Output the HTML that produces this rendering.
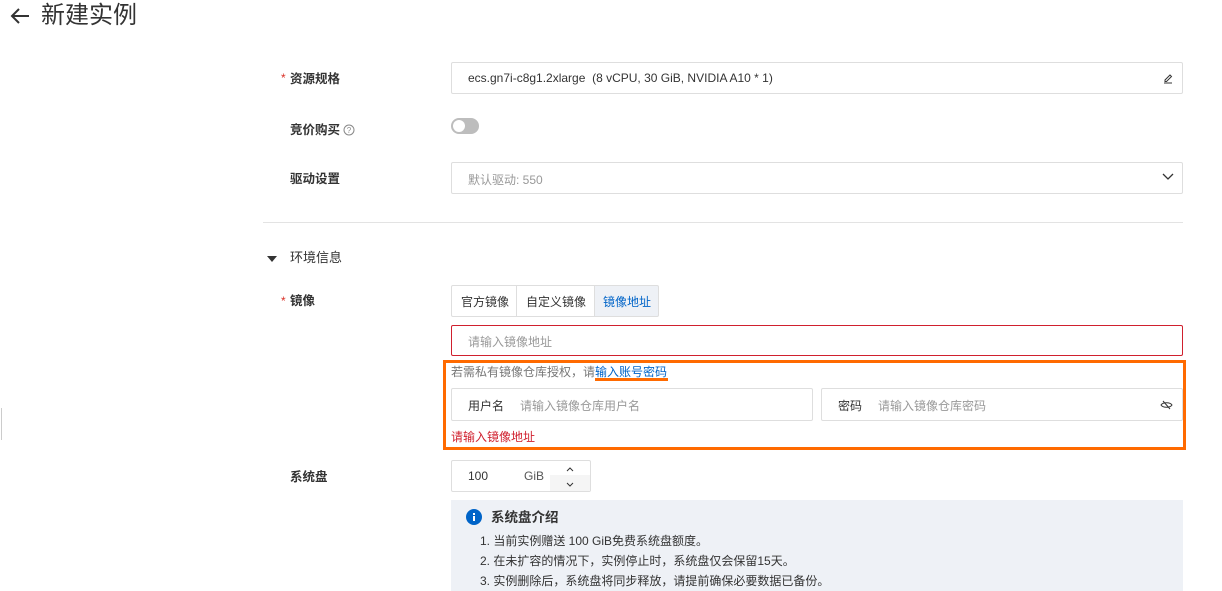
<!DOCTYPE html>
<html><head><meta charset="utf-8"><style>
*{box-sizing:border-box;margin:0;padding:0}
body{width:1222px;height:591px;overflow:hidden;background:#fff;position:relative;font-family:"Liberation Sans","Noto Sans CJK SC",sans-serif;font-size:12px;color:#333}
.a{position:absolute}
.lbl{position:absolute;left:290px;font-size:12.5px;font-weight:bold;color:#333;line-height:16px}
.req{position:absolute;left:281px;color:#d93026;font-size:12px}
.inp{position:absolute;border:1px solid #dedede;background:#fff;border-radius:2px}
.ph{color:#999}
</style></head><body>
<svg class="a" style="left:9px;top:7px" width="22" height="18" viewBox="0 0 22 18"><path d="M20 9H3M10 2L3 9l7 7" fill="none" stroke="#333" stroke-width="2"/></svg>
<div class="a" style="left:41px;top:0px;font-size:24px;line-height:32px;color:#333">新建实例</div>
<div class="a" style="left:1px;top:408px;width:1px;height:32px;background:#ccc"></div>

<span class="req" style="top:71px">*</span><div class="lbl" style="top:71px">资源规格</div>
<div class="inp" style="left:451px;top:62px;width:732px;height:32px"><span class="a" style="left:16px;top:8px">ecs.gn7i-c8g1.2xlarge&nbsp; (8 vCPU, 30 GiB, NVIDIA A10 * 1)</span>
<svg class="a" style="left:710px;top:9px" width="12" height="12" viewBox="0 0 12 12"><path d="M3 8L8 3l1.5 1.5-5 5H3z M2 11h8" fill="none" stroke="#333" stroke-width="1"/></svg></div>

<div class="lbl" style="top:122px">竞价购买</div>
<svg class="a" style="left:343px;top:124px" width="12" height="12" viewBox="0 0 12 12"><circle cx="6" cy="6" r="5" fill="none" stroke="#888"/><text x="6" y="9" font-size="8" text-anchor="middle" fill="#888" font-family="Liberation Sans">?</text></svg>
<div class="a" style="left:451px;top:118px;width:28px;height:16px;border-radius:8px;background:#bdbdbd"><div class="a" style="left:2px;top:2px;width:12px;height:12px;border-radius:50%;background:#fff"></div></div>

<div class="lbl" style="top:171px">驱动设置</div>
<div class="inp" style="left:451px;top:162px;width:732px;height:32px"><span class="a ph" style="left:16px;top:8px">默认驱动: 550</span>
<svg class="a" style="left:710px;top:10px" width="12" height="8" viewBox="0 0 12 8"><path d="M1 1l5 5 5-5" fill="none" stroke="#333" stroke-width="1.3"/></svg></div>

<div class="a" style="left:263px;top:222px;width:920px;height:1px;background:#e3e3e3"></div>
<svg class="a" style="left:267px;top:255px" width="10" height="8"><path d="M0 1h10L5 7z" fill="#333"/></svg>
<div class="lbl" style="top:250px;font-weight:normal;font-size:13px">环境信息</div>

<span class="req" style="top:294px">*</span><div class="lbl" style="top:293px">镜像</div>
<div class="inp" style="left:451px;top:285px;width:66px;height:32px;border-radius:2px 0 0 2px"><span class="a" style="left:9px;top:7px">官方镜像</span></div>
<div class="inp" style="left:516px;top:285px;width:79px;height:32px;border-radius:0"><span class="a" style="left:9px;top:7px">自定义镜像</span></div>
<div class="inp" style="left:594px;top:285px;width:65px;height:32px;background:#eef1f6;border-radius:0 2px 2px 0"><span class="a" style="left:8px;top:7px;color:#0064c8">镜像地址</span></div>

<div class="inp" style="left:451px;top:325px;width:732px;height:31px;border-color:#d0202e"><span class="a ph" style="left:16px;top:7px">请输入镜像地址</span></div>

<div class="a" style="left:443px;top:360px;width:743px;height:90px;border:3px solid #ff6a00"></div>
<div class="a" style="left:451px;top:363px;color:#777">若需私有镜像仓库授权，请<span style="color:#0064c8">输入账号密码</span></div>
<div class="a" style="left:595px;top:378px;width:73px;height:3px;background:#ff6a00"></div>
<div class="inp" style="left:451px;top:388px;width:362px;height:33px"><span class="a" style="left:16px;top:8px">用户名</span><span class="a ph" style="left:68px;top:8px">请输入镜像仓库用户名</span></div>
<div class="inp" style="left:821px;top:388px;width:362px;height:33px"><span class="a" style="left:16px;top:8px">密码</span><span class="a ph" style="left:56px;top:8px">请输入镜像仓库密码</span>
<svg class="a" style="left:338px;top:11px" width="13" height="10" viewBox="0 0 13 10"><path d="M1 5c2-3 9-3 11 0c-2 3-9 3-11 0zM3 1l7 8" fill="none" stroke="#333" stroke-width="1"/></svg></div>
<div class="a" style="left:451px;top:428px;color:#d0202e">请输入镜像地址</div>

<div class="lbl" style="top:469px">系统盘</div>
<div class="inp" style="left:451px;top:460px;width:140px;height:32px"><span class="a" style="left:16px;top:8px">100</span><span class="a" style="left:72px;top:8px;color:#555">GiB</span>
<div class="a" style="left:98px;top:14px;width:40px;height:16px;background:#f5f5f5"></div>
<svg class="a" style="left:113px;top:4px" width="10" height="24" viewBox="0 0 10 24"><path d="M2 6l3-3 3 3M2 18l3 3 3-3" fill="none" stroke="#333" stroke-width="1"/></svg></div>

<div class="a" style="left:451px;top:500px;width:732px;height:91px;background:#eef1f6"></div>
<svg class="a" style="left:466px;top:509px" width="16" height="16" viewBox="0 0 16 16"><circle cx="8" cy="8" r="8" fill="#0064c8"/><rect x="7" y="7" width="2" height="5" fill="#fff"/><rect x="7" y="4" width="2" height="2" fill="#fff"/></svg>
<div class="a" style="left:491px;top:506px;font-size:13.5px;font-weight:bold;color:#333">系统盘介绍</div>
<div class="a" style="left:480px;top:531px;line-height:20px;color:#333">1. 当前实例赠送 100 GiB免费系统盘额度。<br>2. 在未扩容的情况下，实例停止时，系统盘仅会保留15天。<br>3. 实例删除后，系统盘将同步释放，请提前确保必要数据已备份。</div>
</body></html>
